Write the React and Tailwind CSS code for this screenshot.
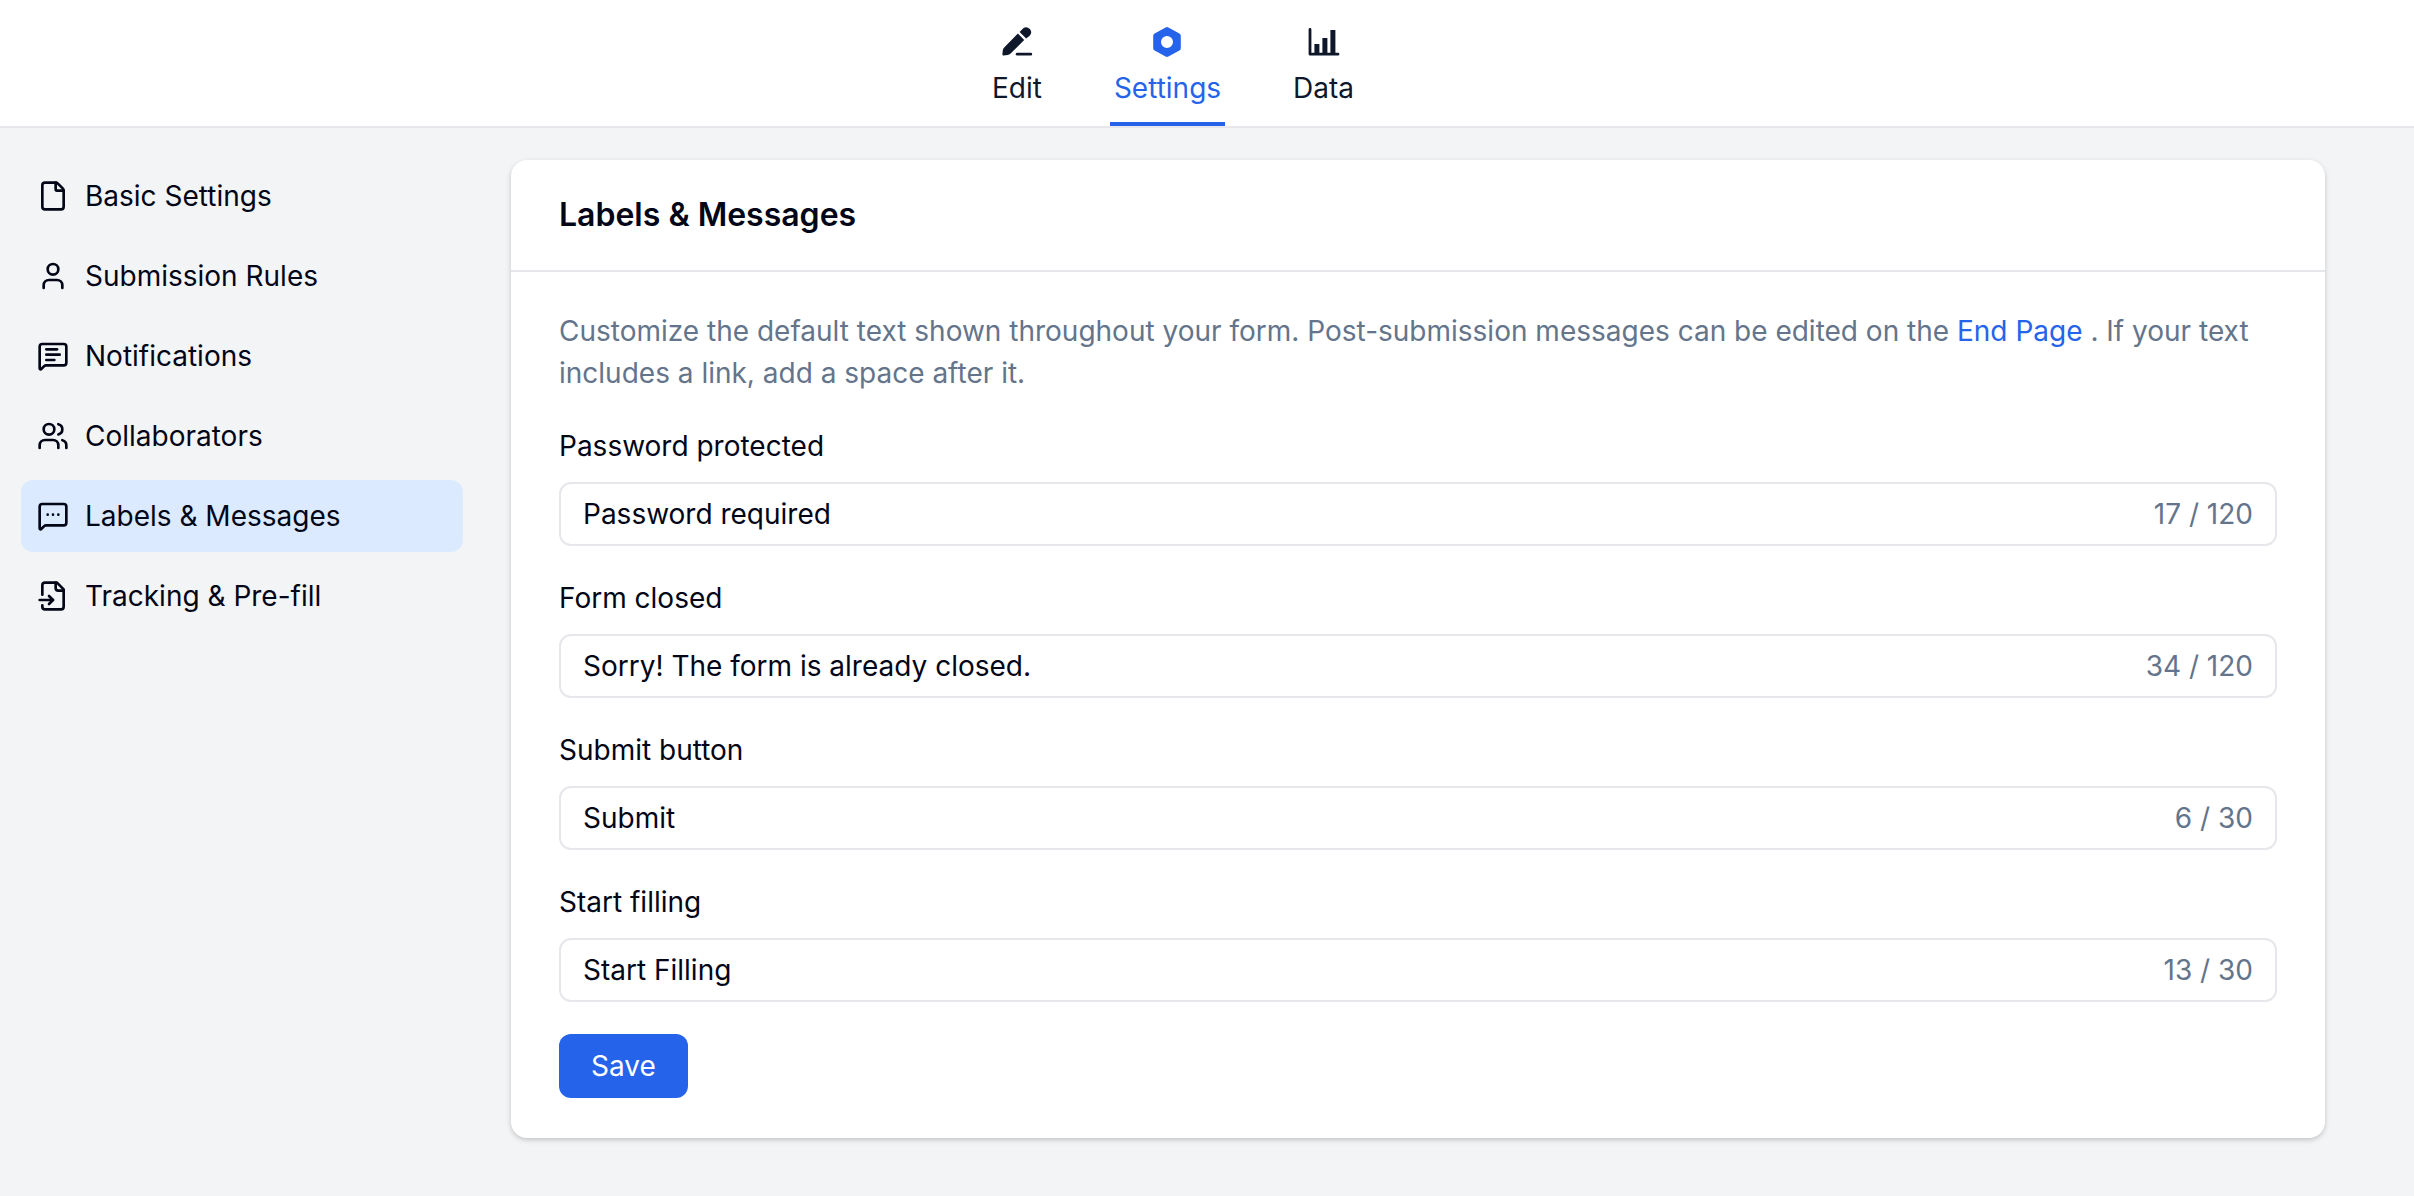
import { useState } from 'react';
import clsx from 'clsx';
import { File, User, MessageSquareText, Users } from 'lucide-react';

function EditIcon() {
  return (
    <svg viewBox="0 0 32 32" className="size-8" fill="currentColor" aria-hidden="true">
      <path d="M16.9 7.6 L23.2 13.9 L9.6 27.6 Q8.3 28.8 6.6 29 L2.6 29.6 Q1.2 29.7 1.4 28.2 L1.8 24.2 Q2 22.6 3.2 21.4 Z" />
      <path d="M18.6 6 L22 2.5 A4.9 4.9 0 0 1 28.9 9.4 L25.2 12.6 Z" />
      <rect x="14.8" y="26.8" width="16.4" height="2.8" rx="1.4" />
    </svg>
  );
}

function SettingsIcon() {
  return (
    <svg viewBox="0 0 32 32" className="size-8" fill="currentColor" aria-hidden="true">
      <path
        fillRule="evenodd"
        d="M14.6 1.4 Q16 .6 17.4 1.4 L28.4 7.4 Q29.8 8.2 29.8 9.8 V22.2 Q29.8 23.8 28.4 24.6 L17.4 30.6 Q16 31.4 14.6 30.6 L3.6 24.6 Q2.2 23.8 2.2 22.2 V9.8 Q2.2 8.2 3.6 7.4 Z M16 10 A6 6 0 1 0 16 22 A6 6 0 1 0 16 10 Z"
      />
    </svg>
  );
}

function DataIcon() {
  return (
    <svg viewBox="0 0 32 32" className="size-8" fill="currentColor" aria-hidden="true">
      <path d="M2 3.5 V28.2 H30" fill="none" stroke="currentColor" strokeWidth="2.8" strokeLinecap="round" strokeLinejoin="round" />
      <rect x="6.4" y="18" width="5" height="10" rx=".5" />
      <rect x="14.4" y="12" width="5" height="16" rx=".5" />
      <rect x="22.4" y="4" width="5" height="24" rx=".5" />
    </svg>
  );
}

function MessageDotsIcon({ className }) {
  return (
    <svg viewBox="0 0 24 24" className={className} fill="none" stroke="currentColor" strokeWidth="2" strokeLinecap="round" strokeLinejoin="round" aria-hidden="true">
      <path d="M22 17a2 2 0 0 1-2 2H6.8a2 2 0 0 0-1.4.6l-2.2 2.2A.7.7 0 0 1 2 21.3V5a2 2 0 0 1 2-2h16a2 2 0 0 1 2 2z" />
      <path d="M8 11h.01M12 11h.01M16 11h.01" />
    </svg>
  );
}

function FileInputIcon({ className }) {
  return (
    <svg viewBox="0 0 24 24" className={className} fill="none" stroke="currentColor" strokeWidth="2" strokeLinecap="round" strokeLinejoin="round" aria-hidden="true">
      <path d="M4 11V4a2 2 0 0 1 2-2h9l5 5v13a2 2 0 0 1-2 2H6a2 2 0 0 1-2-2v-1" />
      <path d="M14 2v4a2 2 0 0 0 2 2h4" />
      <path d="M2 15h10" />
      <path d="m9 18 3-3-3-3" />
    </svg>
  );
}

const tabs = [
  { name: 'Edit', icon: EditIcon },
  { name: 'Settings', icon: SettingsIcon },
  { name: 'Data', icon: DataIcon },
];

const menu = [
  { name: 'Basic Settings', icon: File },
  { name: 'Submission Rules', icon: User },
  { name: 'Notifications', icon: MessageSquareText },
  { name: 'Collaborators', icon: Users },
  { name: 'Labels & Messages', icon: MessageDotsIcon },
  { name: 'Tracking & Pre-fill', icon: FileInputIcon },
];

const initialFields = [
  { id: 'password', label: 'Password protected', value: 'Password required', count: 17, max: 120 },
  { id: 'closed', label: 'Form closed', value: 'Sorry! The form is already closed.', count: 34, max: 120 },
  { id: 'submit', label: 'Submit button', value: 'Submit', count: 6, max: 30 },
  { id: 'start', label: 'Start filling', value: 'Start Filling', count: 13, max: 30 },
];

function TopNav() {
  return (
    <header className="flex justify-center border-b-2 border-[#e5e7eb] bg-white pr-[68px]">
      <nav className="flex gap-16">
        {tabs.map(({ name, icon: Icon }) => (
          <a
            key={name}
            href="#"
            className={clsx(
              'flex flex-col items-center gap-[10px] border-b-4 px-1 pt-[26px] pb-[14px] leading-[40px]',
              name === 'Settings' ? 'border-[#2563eb] text-[#2563eb]' : 'border-transparent text-[#0f172a]'
            )}
          >
            <Icon />
            {name}
          </a>
        ))}
      </nav>
    </header>
  );
}

function Sidebar() {
  return (
    <aside className="w-[442px] shrink-0">
      <nav className="flex flex-col gap-2">
        {menu.map(({ name, icon: Icon }) => (
          <a
            key={name}
            href="#"
            className={clsx(
              'flex items-center gap-4 rounded-xl p-4 leading-[40px]',
              name === 'Labels & Messages' && 'bg-[#dbeafe]'
            )}
          >
            <Icon className="size-8" strokeWidth={2} />
            {name}
          </a>
        ))}
      </nav>
    </aside>
  );
}

function Field({ field, onChange }) {
  return (
    <div className="flex flex-col gap-4">
      <label htmlFor={field.id} className="leading-[40px]">{field.label}</label>
      <div className="flex h-16 items-center rounded-xl border-2 border-[#e5e7eb] px-[22px]">
        <input
          id={field.id}
          type="text"
          className="min-w-0 flex-1 bg-transparent outline-none"
          value={field.value}
          maxLength={field.max}
          onChange={(e) => onChange(field.id, e.target.value)}
        />
        <span className="text-[#64748b]">{field.count} / {field.max}</span>
      </div>
    </div>
  );
}

export default function App() {
  const [fields, setFields] = useState(initialFields);

  const handleChange = (id, value) => {
    setFields(fields.map((f) => (f.id === id ? { ...f, value, count: value.length } : f)));
  };

  return (
    <div className="min-h-screen bg-[#f3f4f6] font-['Inter',sans-serif] text-[28px] text-[#020617]">
      <TopNav />
      <main className="flex gap-12 pt-8 pr-[89px] pl-[21px]">
        <Sidebar />
        <section className="min-w-0 flex-1 rounded-2xl bg-white shadow-[0_2px_6px_rgba(0,0,0,0.1),0_2px_4px_rgba(0,0,0,0.1)]">
          <h2 className="border-b-2 border-[#e5e7eb] px-12 py-8 text-[32px] leading-[46px] font-semibold">
            Labels & Messages
          </h2>
          <form className="flex flex-col gap-8 px-12 pt-[38px] pb-10" onSubmit={(e) => e.preventDefault()}>
            <p className="leading-[42px] text-[#64748b]">
              Customize the default text shown throughout your form. Post-submission messages can be edited on the{' '}
              <a href="#" className="text-[#2563eb]">End Page</a> . If your text includes a link, add a space after it.
            </p>
            {fields.map((field) => (
              <Field key={field.id} field={field} onChange={handleChange} />
            ))}
            <button type="submit" className="h-16 self-start rounded-xl bg-[#2563eb] px-8 text-white">
              Save
            </button>
          </form>
        </section>
      </main>
    </div>
  );
}
